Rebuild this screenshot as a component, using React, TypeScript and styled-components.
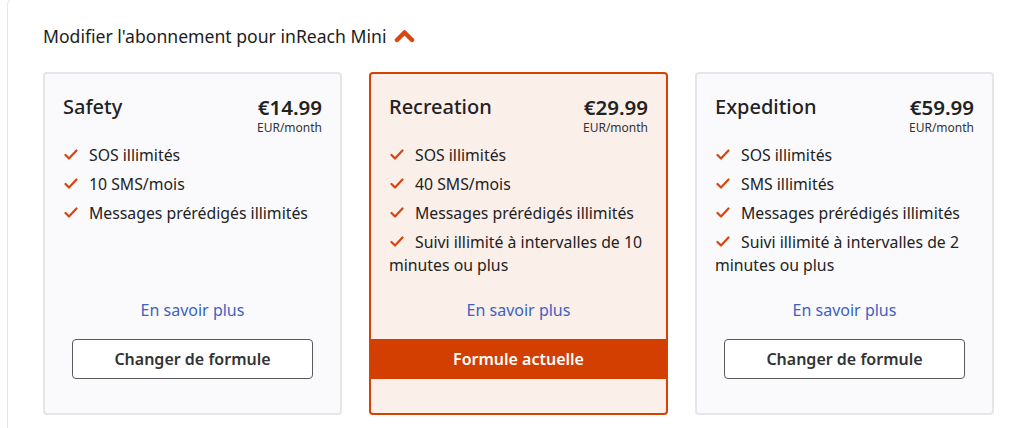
import React from 'react';
import styled, { createGlobalStyle } from 'styled-components';

const GlobalStyle = createGlobalStyle`
  html, body {
    margin: 0;
    padding: 0;
    background: #ffffff;
  }
  body {
    font-family: "Noto Sans", "Open Sans", Arial, sans-serif;
    color: #222;
  }
`;

const Page = styled.div`
  padding-left: 7px;
  height: 428px;
  overflow: hidden;
`;

const Panel = styled.section`
  margin-top: -2px;
  height: 440px;
  border: 1px solid #e6e6e6;
  border-right: none;
  border-bottom: none;
  border-top-left-radius: 7px;
  padding: 25px 0 0 35px;
`;

const Heading = styled.h2`
  display: flex;
  align-items: center;
  gap: 8px;
  margin: 0;
  font-size: 17.6px;
  font-weight: 400;
  line-height: 24px;
  color: #1d1d1d;
`;

const Grid = styled.div`
  display: grid;
  grid-template-columns: repeat(3, 299px);
  gap: 27px;
  margin-top: 24px;
`;

const Card = styled.div<{ $current?: boolean }>`
  display: flex;
  flex-direction: column;
  box-sizing: border-box;
  height: 343px;
  border: 2px solid ${(p) => (p.$current ? '#d74200' : '#e6e6e8')};
  border-radius: 4px;
  background: ${(p) => (p.$current ? '#fbefea' : '#fafafc')};
  padding: 20px 0 34px;
`;

const CardHeader = styled.div`
  display: flex;
  justify-content: space-between;
  align-items: flex-start;
  padding: 0 18px;
`;

const PlanName = styled.h3`
  margin: 0;
  font-size: 20px;
  font-weight: 500;
  line-height: 26px;
  color: #222;
`;

const PriceBox = styled.div`
  display: flex;
  flex-direction: column;
  align-items: flex-end;
`;

const Price = styled.span`
  font-size: 20.5px;
  font-weight: 600;
  line-height: 26px;
  color: #222;
`;

const Period = styled.span`
  font-size: 12px;
  line-height: 16px;
  color: #333;
`;

const Features = styled.ul`
  list-style: none;
  margin: 8px 0 0;
  padding: 0 18px;
  display: flex;
  flex-direction: column;
  gap: 6px;
`;

const Feature = styled.li`
  font-size: 15.8px;
  line-height: 23px;
  color: #222;
`;

const Check = styled.svg`
  width: 14px;
  height: 12px;
  margin: 0 11px 0 1px;
  vertical-align: 0px;
`;

const MoreLink = styled.a`
  margin-top: auto;
  margin-bottom: 18px;
  text-align: center;
  font-size: 16px;
  line-height: 22px;
  color: #3a62c2;
  text-decoration: none;
  cursor: pointer;
`;

const ChangeButton = styled.button`
  align-self: center;
  width: 241px;
  height: 40px;
  border: 1px solid #5a5a5a;
  border-radius: 4px;
  background: #ffffff;
  font-family: inherit;
  font-size: 16px;
  font-weight: 600;
  color: #333;
  cursor: pointer;
`;

const CurrentBar = styled.div`
  height: 40px;
  display: flex;
  align-items: center;
  justify-content: center;
  background: #d33f00;
  color: #ffffff;
  font-size: 16px;
  font-weight: 600;
`;

const CheckIcon = () => (
  <Check viewBox="0 0 14 12">
    <polyline points="1.5,6 5,9.5 12.5,1.5" fill="none" stroke="#d5460f" strokeWidth="2.2" strokeLinecap="round" strokeLinejoin="round" />
  </Check>
);

const ChevronUp = () => (
  <svg width="21" height="14" viewBox="0 0 21 14">
    <polyline points="3,11 10.5,3.5 18,11" fill="none" stroke="#d9470f" strokeWidth="4.5" strokeLinecap="round" strokeLinejoin="round" />
  </svg>
);

type Plan = {
  name: string;
  price: string;
  features: string[];
  current?: boolean;
};

const plans: Plan[] = [
  {
    name: 'Safety',
    price: '€14.99',
    features: ['SOS illimités', '10 SMS/mois', 'Messages prérédigés illimités'],
  },
  {
    name: 'Recreation',
    price: '€29.99',
    current: true,
    features: [
      'SOS illimités',
      '40 SMS/mois',
      'Messages prérédigés illimités',
      'Suivi illimité à intervalles de 10 minutes ou plus',
    ],
  },
  {
    name: 'Expedition',
    price: '€59.99',
    features: [
      'SOS illimités',
      'SMS illimités',
      'Messages prérédigés illimités',
      'Suivi illimité à intervalles de 2 minutes ou plus',
    ],
  },
];

const App: React.FC = () => {
  return (
    <>
      <GlobalStyle />
      <Page>
        <Panel>
          <Heading>
            Modifier l'abonnement pour inReach Mini <ChevronUp />
          </Heading>
          <Grid>
            {plans.map((plan) => (
              <Card key={plan.name} $current={plan.current}>
                <CardHeader>
                  <PlanName>{plan.name}</PlanName>
                  <PriceBox>
                    <Price>{plan.price}</Price>
                    <Period>EUR/month</Period>
                  </PriceBox>
                </CardHeader>
                <Features>
                  {plan.features.map((f) => (
                    <Feature key={f}>
                      <CheckIcon />
                      {f}
                    </Feature>
                  ))}
                </Features>
                <MoreLink>En savoir plus</MoreLink>
                {plan.current ? (
                  <CurrentBar>Formule actuelle</CurrentBar>
                ) : (
                  <ChangeButton>Changer de formule</ChangeButton>
                )}
              </Card>
            ))}
          </Grid>
        </Panel>
      </Page>
    </>
  );
};

export default App;
